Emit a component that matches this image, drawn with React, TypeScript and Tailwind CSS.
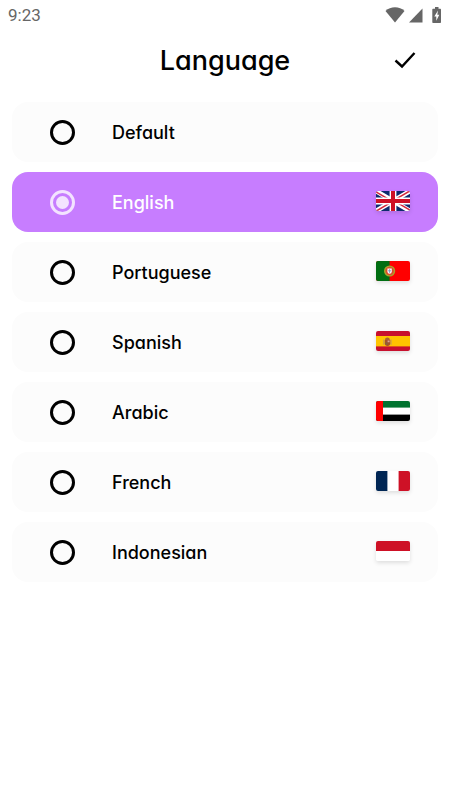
import { useState, type ReactNode } from 'react'

function FlagUK() {
  return (
    <>
      <rect width="34" height="20" fill="#0f2a6e" />
      <path d="M0 0L34 20M34 0L0 20" stroke="#fff" strokeWidth="4.6" />
      <path d="M0 0.9L15 9.7M34 19.1L19 10.3" stroke="#d4283c" strokeWidth="1.5" />
      <path d="M34 -0.2L19 8.6M0 20.2L15 11.4" stroke="#d4283c" strokeWidth="1.5" />
      <path d="M17 0V20M0 10H34" stroke="#fff" strokeWidth="6.8" />
      <path d="M17 0V20M0 10H34" stroke="#ce1126" strokeWidth="4" />
    </>
  )
}

function FlagPortugal() {
  return (
    <>
      <rect width="34" height="20" fill="#f00" />
      <rect width="13.6" height="20" fill="#006e12" />
      <circle cx="13.6" cy="10" r="5.6" fill="#a8a52a" />
      <circle cx="13.6" cy="10" r="4.2" fill="#d8502a" />
      <path d="M10.9 7h5.4v3.8a2.7 2.7 0 0 1-5.4 0z" fill="#e2402e" />
      <path d="M11.4 7.5h4.4v3.1a2.2 2.2 0 0 1-4.4 0z" fill="#fff" />
      <path d="M13.6 8.2v3.6M12.1 9.8h3" stroke="#7d9cc4" strokeWidth="1" />
    </>
  )
}

function FlagSpain() {
  return (
    <>
      <rect width="34" height="20" fill="#c8102e" />
      <rect y="5" width="34" height="10.4" fill="#ffc400" />
      <path d="M7.8 8.4v5.4M15 8.4v5.4" stroke="#c79a55" strokeWidth="1.1" />
      <path d="M8.8 9h5.4v3.2a2.7 2.7 0 0 1-5.4 0z" fill="#a5532c" />
      <path d="M9 8.9c0-3.2 4.8-3.2 4.8 0z" fill="#ad6230" />
      <path d="M11.6 9.4h2v1.8h-2z" fill="#d8a79a" />
      <path d="M9.6 11.4h1.8v1.8h-1.8z" fill="#7d6a3c" />
    </>
  )
}

function FlagUAE() {
  return (
    <>
      <rect width="34" height="20" fill="#fff" />
      <rect width="34" height="6.6" fill="#00732f" />
      <rect y="13.6" width="34" height="6.4" fill="#000" />
      <rect width="7" height="20" fill="#f00" />
    </>
  )
}

function FlagFrance() {
  return (
    <>
      <rect width="34" height="20" fill="#fff" />
      <rect width="11.4" height="20" fill="#002654" />
      <rect x="22.6" width="11.4" height="20" fill="#ce1126" />
    </>
  )
}

function FlagIndonesia() {
  return (
    <>
      <rect width="34" height="20" fill="#fff" />
      <rect width="34" height="10" fill="#ce1126" />
    </>
  )
}

const LANGUAGES: { id: string; label: string; flag?: ReactNode }[] = [
  { id: 'default', label: 'Default' },
  { id: 'en', label: 'English', flag: <FlagUK /> },
  { id: 'pt', label: 'Portuguese', flag: <FlagPortugal /> },
  { id: 'es', label: 'Spanish', flag: <FlagSpain /> },
  { id: 'ar', label: 'Arabic', flag: <FlagUAE /> },
  { id: 'fr', label: 'French', flag: <FlagFrance /> },
  { id: 'id', label: 'Indonesian', flag: <FlagIndonesia /> },
]

function StatusBar() {
  return (
    <div className="flex h-[30px] items-center justify-between px-2 text-[#666]">
      <span className="font-['Roboto',sans-serif] text-[17px] leading-6">9:23</span>
      <div className="flex items-center">
        <svg width="20" height="16" viewBox="0 0 20 16" fill="currentColor" aria-hidden="true">
          <path d="M10 15.5L.5 4C3 1.4 6.5.3 10 .3S17 1.4 19.500 4z" />
        </svg>
        <svg width="15" height="16" viewBox="0 0 15 16" fill="currentColor" className="ml-1" aria-hidden="true">
          <path d="M0 15.5L13.500 1.500v14z" />
        </svg>
        <svg width="10" height="17" viewBox="0 0 10 17" className="ml-2" aria-hidden="true">
          <path
            d="M3 0h3.500v1.700h1.500c.6 0 1 .4 1 1V15c0 .6-.4 1-1 1H1.300c-.6 0-1-.4-1-1V2.700c0-.6.4-1 1-1H3z"
            fill="currentColor"
          />
          <path d="M6 3.500L2.300 9.600h2v4.200L7.300 7.700H5.300z" fill="#fff" />
        </svg>
      </div>
    </div>
  )
}

export default function App() {
  const [selected, setSelected] = useState('en')

  return (
    <main className="min-h-screen bg-white font-['Inter',sans-serif] text-black [font-feature-settings:'cv11']">
      <StatusBar />

      <header className="grid h-[62px] grid-cols-[1fr_auto_1fr] items-center px-8">
        <h1 className="col-start-2 text-[27px] font-medium leading-9">Language</h1>
        <button type="button" aria-label="Save language" className="justify-self-end p-0.5">
          <svg width="22" height="18" viewBox="0 0 22 18" fill="none" aria-hidden="true">
            <path d="M1.500 8.500L8 14.500L20.500 1" stroke="currentColor" strokeWidth="2.4" />
          </svg>
        </button>
      </header>

      {/* Language list */}
      <div role="radiogroup" aria-label="Language" className="flex flex-col gap-2.5 px-3 pt-2.5">
        {LANGUAGES.map((lang) => (
          <label
            key={lang.id}
            className="flex h-[60px] cursor-pointer items-center rounded-2xl bg-[#fcfcfc] pl-[38px] pr-7 has-checked:bg-[#c77dff] has-checked:text-white"
          >
            <input
              type="radio"
              name="language"
              value={lang.id}
              checked={selected === lang.id}
              onChange={() => setSelected(lang.id)}
              className="grid size-[25px] shrink-0 appearance-none place-items-center rounded-full border-3 border-black checked:border-[#f3e3ff] checked:before:size-[13px] checked:before:rounded-full checked:before:bg-[#f3e3ff] checked:before:content-['']"
            />
            <span className="ml-[37px] flex-1 pt-0.5 text-lg font-medium">{lang.label}</span>
            {lang.flag && (
              <svg
                width="34"
                height="20"
                viewBox="0 0 34 20"
                className="mb-0.5 rounded-xs shadow-[0_2px_4px_rgba(0,0,0,0.12)]"
                aria-hidden="true"
              >
                {lang.flag}
              </svg>
            )}
          </label>
        ))}
      </div>
    </main>
  )
}
